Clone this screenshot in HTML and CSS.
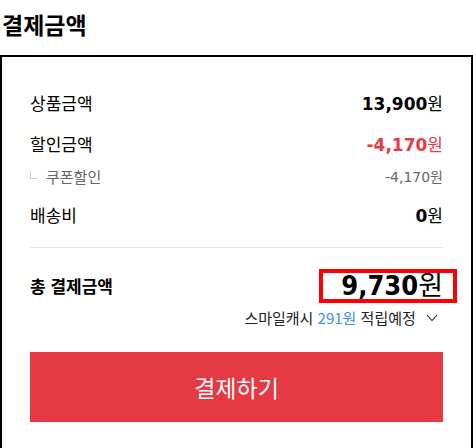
FILE: index.html
```html
<!DOCTYPE html>
<html lang="ko">
  <head>
    <meta charset="UTF-8" />
    <title>결제금액</title>
    <link rel="stylesheet" href="styles.css">
  </head>
  <body>
    <h2 class="title">결제금액</h2>

    <div class="pay-box">
      <div class="row">
        <span class="label">상품금액</span>
        <span class="value"><b>13,900</b>원</span>
      </div>
      <div class="row discount">
        <span class="label">할인금액</span>
        <span class="value"><b>-4,170</b>원</span>
      </div>
      <div class="row sub">
        <span class="label"><i class="corner"></i>쿠폰할인</span>
        <span class="value">-4,170원</span>
      </div>
      <div class="row ship">
        <span class="label">배송비</span>
        <span class="value"><b>0</b>원</span>
      </div>

      <hr class="divider" />

      <div class="row total">
        <span class="label">총 결제금액</span>
        <span class="value price"><b>9,730</b>원</span>
      </div>
      <div class="cash">
        스마일캐시 <span class="cash-amt">291원</span> 적립예정
        <svg class="chev" width="12" height="8" viewBox="0 0 12 8">
          <polyline points="1,1 6,6.5 11,1" fill="none" stroke="#222" stroke-width="1.1" />
        </svg>
      </div>

      <button class="pay-btn">결제하기</button>
    </div>
  </body>
</html>
```

FILE: styles.css
```css
body {
  margin: 0;
  font-family: "DejaVu Sans", "Noto Sans CJK KR", sans-serif;
  color: #000;
  background: #fff;
}

.title {
  margin: 0;
  padding: 8px 0 0 2px;
  height: 47px;
  font-family: "Noto Sans CJK KR", sans-serif;
  font-size: 23px;
  line-height: 32px;
  font-weight: bold;
}

.pay-box {
  border: 2px solid #000;
  padding: 33px 28px 40px;
}

.row {
  display: flex;
  justify-content: space-between;
  align-items: center;
  height: 24px;
  font-size: 17px;
}

.label {
  font-family: "Noto Sans CJK KR", sans-serif;
}

.value {
  font-size: 17px;
}

.value b {
  font-weight: bold;
}

.discount {
  margin-top: 17px;
}

.discount .value {
  color: #e83a45;
}

.sub {
  margin-top: 11px;
  height: 20px;
  font-size: 15px;
  color: #666;
}

.sub .value {
  font-size: 14px;
}

.corner {
  display: inline-block;
  width: 6px;
  height: 7px;
  border-left: 1px solid #ccc;
  border-bottom: 1px solid #ccc;
  margin: 0 9px 0 0;
  vertical-align: 4px;
}

.ship {
  margin-top: 16px;
}

.divider {
  border: 0;
  border-top: 1px solid #e5e5e5;
  margin: 21px 0 0;
}

.total {
  margin-top: 20px;
  height: 34px;
}

.total .label {
  font-weight: bold;
}

.price {
  position: relative;
  font-size: 27px;
  line-height: 32px;
  padding-top: 2px;
}

.price b {
  font-family: "DejaVu Sans Condensed", "DejaVu Sans", sans-serif;
  font-stretch: condensed;
}

/* highlight box around total */
.price::after {
  content: "";
  position: absolute;
  top: 1px;
  bottom: -1px;
  left: -22px;
  right: -14px;
  border: 4px solid #f00;
}

.cash {
  margin-top: 6px;
  margin-right: 5px;
  text-align: right;
  font-family: "Noto Sans CJK KR", sans-serif;
  font-size: 15px;
  line-height: 20px;
  color: #222;
}

.cash-amt {
  color: #3d8ff0;
}

.chev {
  margin-left: 6px;
  vertical-align: 2px;
}

.pay-btn {
  display: block;
  width: 100%;
  height: 70px;
  margin-top: 24px;
  border: none;
  background: #e53a44;
  color: #fff;
  font-family: "Noto Sans CJK KR", sans-serif;
  font-size: 23px;
  cursor: pointer;
}
```
